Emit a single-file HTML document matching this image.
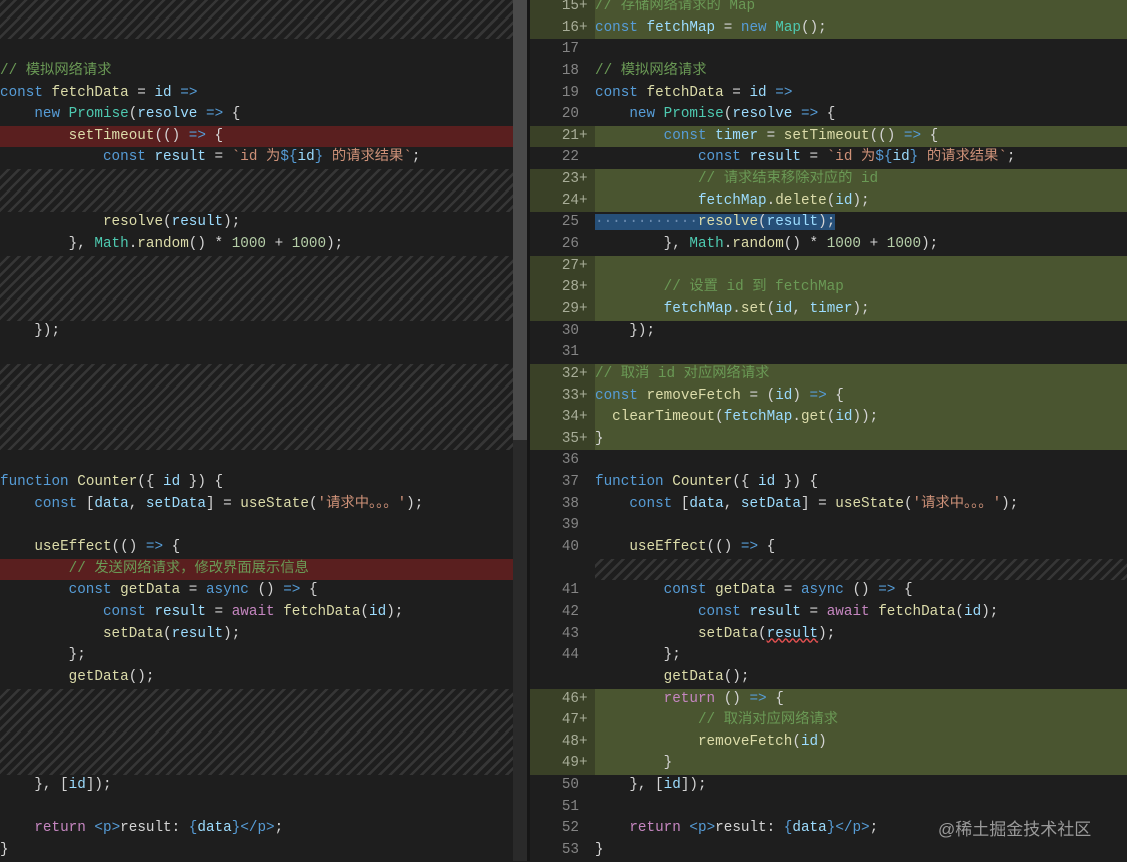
<!DOCTYPE html>
<html><head><meta charset="utf-8"><style>
*{margin:0;padding:0;box-sizing:border-box}
body{width:1127px;height:861px;background:#1e1e1e;overflow:hidden;position:relative;font-family:"Liberation Mono","Noto Sans CJK SC",monospace;font-size:14.3px;color:#d4d4d4}
.pane{position:absolute;top:-4px}
.r{height:21.65px;line-height:21.65px;white-space:pre;position:relative}
#L{left:0;width:513px}
#R{left:530px;width:597px}
.h{background:repeating-linear-gradient(135deg,#1e1e1e 0 5px,#363636 5px 7.5px)}
.red{background:#5a1f1f}
.g{background:linear-gradient(90deg,#3a4127 0 65px,#4a5530 65px)}
.n{display:inline-block;width:49px;text-align:right;color:#858585}
.p{display:inline-block;width:16px;color:#858585}
.g .n,.g .p{color:#a8ad98}
.k{color:#569cd6}.f{color:#dcdcaa}.v{color:#9cdcfe}.c{color:#4ec9b0}.s{color:#ce9178}.cm{color:#6a9955}.nu{color:#b5cea8}.pu{color:#c586c0}
.sel{background:#264f78}
#sb{position:absolute;left:513px;top:0;width:14px;height:861px;background:#2a2a2a}
#th{position:absolute;left:513px;top:0;width:14px;height:440px;background:#4a4a4a}
#dv{position:absolute;left:527px;top:0;width:3px;height:861px;background:#161616}
#wm{position:absolute;left:938px;top:815px;color:#9a9a9a;font-family:"Liberation Sans","Noto Sans CJK SC",sans-serif;font-size:17px}
</style></head><body>
<div id="L" class="pane">
<div class="r h"></div>
<div class="r h"></div>
<div class="r"></div>
<div class="r"><span class="cm">// 模拟网络请求</span></div>
<div class="r"><span class="k">const</span> <span class="f">fetchData</span> = <span class="v">id</span> <span class="k">=&gt;</span></div>
<div class="r">    <span class="k">new</span> <span class="c">Promise</span>(<span class="v">resolve</span> <span class="k">=&gt;</span> {</div>
<div class="r red">        <span class="f">setTimeout</span>(() <span class="k">=&gt;</span> {</div>
<div class="r">            <span class="k">const</span> <span class="v">result</span> = <span class="s">`id 为</span><span class="k">${</span><span class="v">id</span><span class="k">}</span><span class="s"> 的请求结果`</span>;</div>
<div class="r h"></div>
<div class="r h"></div>
<div class="r">            <span class="f">resolve</span>(<span class="v">result</span>);</div>
<div class="r">        }, <span class="c">Math</span>.<span class="f">random</span>() * <span class="nu">1000</span> + <span class="nu">1000</span>);</div>
<div class="r h"></div>
<div class="r h"></div>
<div class="r h"></div>
<div class="r">    });</div>
<div class="r"></div>
<div class="r h"></div>
<div class="r h"></div>
<div class="r h"></div>
<div class="r h"></div>
<div class="r"></div>
<div class="r"><span class="k">function</span> <span class="f">Counter</span>({ <span class="v">id</span> }) {</div>
<div class="r">    <span class="k">const</span> [<span class="v">data</span>, <span class="v">setData</span>] = <span class="f">useState</span>(<span class="s">'请求中。。。'</span>);</div>
<div class="r"></div>
<div class="r">    <span class="f">useEffect</span>(() <span class="k">=&gt;</span> {</div>
<div class="r red">        <span class="cm">// 发送网络请求，修改界面展示信息</span></div>
<div class="r">        <span class="k">const</span> <span class="f">getData</span> = <span class="k">async</span> () <span class="k">=&gt;</span> {</div>
<div class="r">            <span class="k">const</span> <span class="v">result</span> = <span class="pu">await</span> <span class="f">fetchData</span>(<span class="v">id</span>);</div>
<div class="r">            <span class="f">setData</span>(<span class="v">result</span>);</div>
<div class="r">        };</div>
<div class="r">        <span class="f">getData</span>();</div>
<div class="r h"></div>
<div class="r h"></div>
<div class="r h"></div>
<div class="r h"></div>
<div class="r">    }, [<span class="v">id</span>]);</div>
<div class="r"></div>
<div class="r">    <span class="pu">return</span> <span class="k">&lt;p&gt;</span>result: <span class="k">{</span><span class="v">data</span><span class="k">}</span><span class="k">&lt;/p&gt;</span>;</div>
<div class="r">}</div>
</div>
<div id="sb"></div><div id="th"></div><div id="dv"></div>
<div id="R" class="pane">
<div class="r g"><span class="n">15</span><span class="p">+</span><span class="cm">// 存储网络请求的 Map</span></div>
<div class="r g"><span class="n">16</span><span class="p">+</span><span class="k">const</span> <span class="v">fetchMap</span> = <span class="k">new</span> <span class="c">Map</span>();</div>
<div class="r"><span class="n">17</span><span class="p"></span></div>
<div class="r"><span class="n">18</span><span class="p"></span><span class="cm">// 模拟网络请求</span></div>
<div class="r"><span class="n">19</span><span class="p"></span><span class="k">const</span> <span class="f">fetchData</span> = <span class="v">id</span> <span class="k">=&gt;</span></div>
<div class="r"><span class="n">20</span><span class="p"></span>    <span class="k">new</span> <span class="c">Promise</span>(<span class="v">resolve</span> <span class="k">=&gt;</span> {</div>
<div class="r g"><span class="n">21</span><span class="p">+</span>        <span class="k">const</span> <span class="v">timer</span> = <span class="f">setTimeout</span>(() <span class="k">=&gt;</span> {</div>
<div class="r"><span class="n">22</span><span class="p"></span>            <span class="k">const</span> <span class="v">result</span> = <span class="s">`id 为</span><span class="k">${</span><span class="v">id</span><span class="k">}</span><span class="s"> 的请求结果`</span>;</div>
<div class="r g"><span class="n">23</span><span class="p">+</span>            <span class="cm">// 请求结束移除对应的 id</span></div>
<div class="r g"><span class="n">24</span><span class="p">+</span>            <span class="v">fetchMap</span>.<span class="f">delete</span>(<span class="v">id</span>);</div>
<div class="r"><span class="n">25</span><span class="p"></span><span class="sel"><span style="color:#6a8bb0">············</span><span class="f">resolve</span>(<span class="v">result</span>);</span></div>
<div class="r"><span class="n">26</span><span class="p"></span>        }, <span class="c">Math</span>.<span class="f">random</span>() * <span class="nu">1000</span> + <span class="nu">1000</span>);</div>
<div class="r g"><span class="n">27</span><span class="p">+</span></div>
<div class="r g"><span class="n">28</span><span class="p">+</span>        <span class="cm">// 设置 id 到 fetchMap</span></div>
<div class="r g"><span class="n">29</span><span class="p">+</span>        <span class="v">fetchMap</span>.<span class="f">set</span>(<span class="v">id</span>, <span class="v">timer</span>);</div>
<div class="r"><span class="n">30</span><span class="p"></span>    });</div>
<div class="r"><span class="n">31</span><span class="p"></span></div>
<div class="r g"><span class="n">32</span><span class="p">+</span><span class="cm">// 取消 id 对应网络请求</span></div>
<div class="r g"><span class="n">33</span><span class="p">+</span><span class="k">const</span> <span class="f">removeFetch</span> = (<span class="v">id</span>) <span class="k">=&gt;</span> {</div>
<div class="r g"><span class="n">34</span><span class="p">+</span>  <span class="f">clearTimeout</span>(<span class="v">fetchMap</span>.<span class="f">get</span>(<span class="v">id</span>));</div>
<div class="r g"><span class="n">35</span><span class="p">+</span>}</div>
<div class="r"><span class="n">36</span><span class="p"></span></div>
<div class="r"><span class="n">37</span><span class="p"></span><span class="k">function</span> <span class="f">Counter</span>({ <span class="v">id</span> }) {</div>
<div class="r"><span class="n">38</span><span class="p"></span>    <span class="k">const</span> [<span class="v">data</span>, <span class="v">setData</span>] = <span class="f">useState</span>(<span class="s">'请求中。。。'</span>);</div>
<div class="r"><span class="n">39</span><span class="p"></span></div>
<div class="r"><span class="n">40</span><span class="p"></span>    <span class="f">useEffect</span>(() <span class="k">=&gt;</span> {</div>
<div class="r" style="background:linear-gradient(90deg,#1e1e1e 0 65px,transparent 65px),repeating-linear-gradient(135deg,#1e1e1e 0 5px,#363636 5px 7.5px)"></div>
<div class="r"><span class="n">41</span><span class="p"></span>        <span class="k">const</span> <span class="f">getData</span> = <span class="k">async</span> () <span class="k">=&gt;</span> {</div>
<div class="r"><span class="n">42</span><span class="p"></span>            <span class="k">const</span> <span class="v">result</span> = <span class="pu">await</span> <span class="f">fetchData</span>(<span class="v">id</span>);</div>
<div class="r"><span class="n">43</span><span class="p"></span>            <span class="f">setData</span>(<span class="v" style="text-decoration:underline wavy #e05050">result</span>);</div>
<div class="r"><span class="n">44</span><span class="p"></span>        };</div>
<div class="r"><span class="n"></span><span class="p"></span>        <span class="f">getData</span>();</div>
<div class="r g"><span class="n">46</span><span class="p">+</span>        <span class="pu">return</span> () <span class="k">=&gt;</span> {</div>
<div class="r g"><span class="n">47</span><span class="p">+</span>            <span class="cm">// 取消对应网络请求</span></div>
<div class="r g"><span class="n">48</span><span class="p">+</span>            <span class="f">removeFetch</span>(<span class="v">id</span>)</div>
<div class="r g"><span class="n">49</span><span class="p">+</span>        }</div>
<div class="r"><span class="n">50</span><span class="p"></span>    }, [<span class="v">id</span>]);</div>
<div class="r"><span class="n">51</span><span class="p"></span></div>
<div class="r"><span class="n">52</span><span class="p"></span>    <span class="pu">return</span> <span class="k">&lt;p&gt;</span>result: <span class="k">{</span><span class="v">data</span><span class="k">}</span><span class="k">&lt;/p&gt;</span>;</div>
<div class="r"><span class="n">53</span><span class="p"></span>}</div>
</div>
<div id="wm">@稀土掘金技术社区</div>
</body></html>
